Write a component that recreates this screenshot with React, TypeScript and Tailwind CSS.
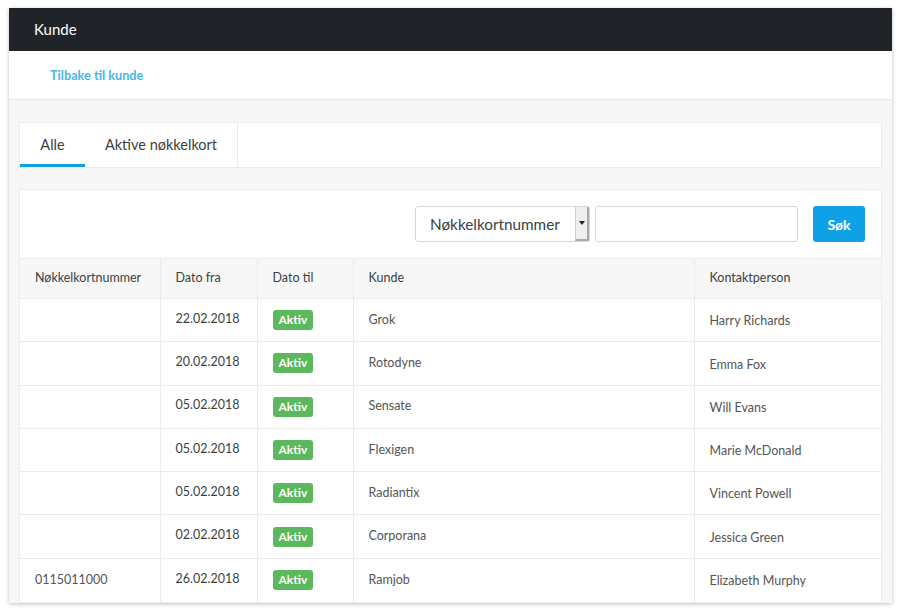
import React from 'react';

const rows = [
  { nr: '', fra: '22.02.2018', kunde: 'Grok', kontakt: 'Harry Richards' },
  { nr: '', fra: '20.02.2018', kunde: 'Rotodyne', kontakt: 'Emma Fox' },
  { nr: '', fra: '05.02.2018', kunde: 'Sensate', kontakt: 'Will Evans' },
  { nr: '', fra: '05.02.2018', kunde: 'Flexigen', kontakt: 'Marie McDonald' },
  { nr: '', fra: '05.02.2018', kunde: 'Radiantix', kontakt: 'Vincent Powell' },
  { nr: '', fra: '02.02.2018', kunde: 'Corporana', kontakt: 'Jessica Green' },
  { nr: '0115011000', fra: '26.02.2018', kunde: 'Ramjob', kontakt: 'Elizabeth Murphy' },
];

export default function App() {
  return (
    <div className="h-[615px] overflow-hidden bg-white pt-2 pl-[9px] pr-[10px] font-['Lato','Noto_Sans',sans-serif] text-[#3a3f44]">
      <div className="h-[595px] overflow-hidden bg-[#f7f7f7] shadow-[0_1px_4px_rgba(0,0,0,0.25)]">
        <div className="flex h-[43px] items-center bg-[#202428] px-[25px] text-[15px] text-white">Kunde</div>
        <div className="flex h-[49px] items-center border-b border-[#e6e6e6] bg-white px-[41px] pt-[1px]">
          <a className="text-[12.7px] font-bold text-[#4ab5e8]">Tilbake til kunde</a>
        </div>

        <div className="px-[10px] pt-[22px]">
          <div className="flex h-[46px] border border-[#ececec] bg-white">
            <div className="flex w-[65px] items-center justify-center border-b-[3px] border-[#129fdf] pt-[3px] text-[14.5px]">Alle</div>
            <div className="flex w-[153px] items-center justify-center border-r border-[#ececec] text-[14.5px]">Aktive nøkkelkort</div>
          </div>

          <div className="mt-[21px] border border-[#ececec] bg-white">
            <div className="flex h-[68px] items-center justify-end pr-[16px]">
              <div className="flex h-[36px] w-[175px] items-stretch rounded-[3px] border border-[#d6d6d6]">
                <div className="flex flex-1 items-center pl-[14px] text-[15.3px]">Nøkkelkortnummer</div>
                <div className="flex w-[14px] items-center justify-center border-l border-[#cfcfcf] border-r-2 border-r-[#a9a9a9] border-b-2 border-b-[#a9a9a9] bg-[#efefef]">
                  <svg width="6" height="4" viewBox="0 0 6 4"><path d="M0 0h6L3 4z" fill="#222" /></svg>
                </div>
              </div>
              <div className="ml-[5px] h-[36px] w-[203px] rounded-[3px] border border-[#d6d6d6]" />
              <button className="ml-[15px] h-[36px] w-[52px] rounded-[3px] bg-[#0ea1e6] text-[14px] font-bold text-white">Søk</button>
            </div>

            <table className="w-full border-collapse text-[12.5px]">
              <thead>
                <tr className="h-[40px] bg-[#f7f7f7] text-left">
                  <th className="w-[140px] border-r border-t border-[#ececec] pl-[15px] font-normal">Nøkkelkortnummer</th>
                  <th className="w-[97px] border-r border-t border-[#ececec] pl-[15px] font-normal">Dato fra</th>
                  <th className="w-[96px] border-r border-t border-[#ececec] pl-[15px] font-normal">Dato til</th>
                  <th className="w-[341px] border-r border-t border-[#ececec] pl-[15px] font-normal">Kunde</th>
                  <th className="border-t border-[#ececec] pl-[15px] font-normal">Kontaktperson</th>
                </tr>
              </thead>
              <tbody>
                {rows.map((r, i) => (
                  <tr key={i} className="h-[43.3px]">
                    <td className="border-r border-t border-[#ececec] pl-[15px] align-middle text-[#555]">{r.nr}</td>
                    <td className="border-r border-t border-[#ececec] pl-[15px] pb-[2px]">{r.fra}</td>
                    <td className="border-r border-t border-[#ececec] pl-[15px]">
                      <span className="inline-block rounded-[3px] bg-[#5cb85c] px-[6px] py-[3px] text-[12px] font-bold leading-[14px] text-white">Aktiv</span>
                    </td>
                    <td className="border-r border-t border-[#ececec] pl-[15px] text-[#555]">{r.kunde}</td>
                    <td className="border-t border-[#ececec] pl-[15px] pt-[3px] text-[#555]">{r.kontakt}</td>
                  </tr>
                ))}
              </tbody>
            </table>
          </div>
        </div>
      </div>
    </div>
  );
}
